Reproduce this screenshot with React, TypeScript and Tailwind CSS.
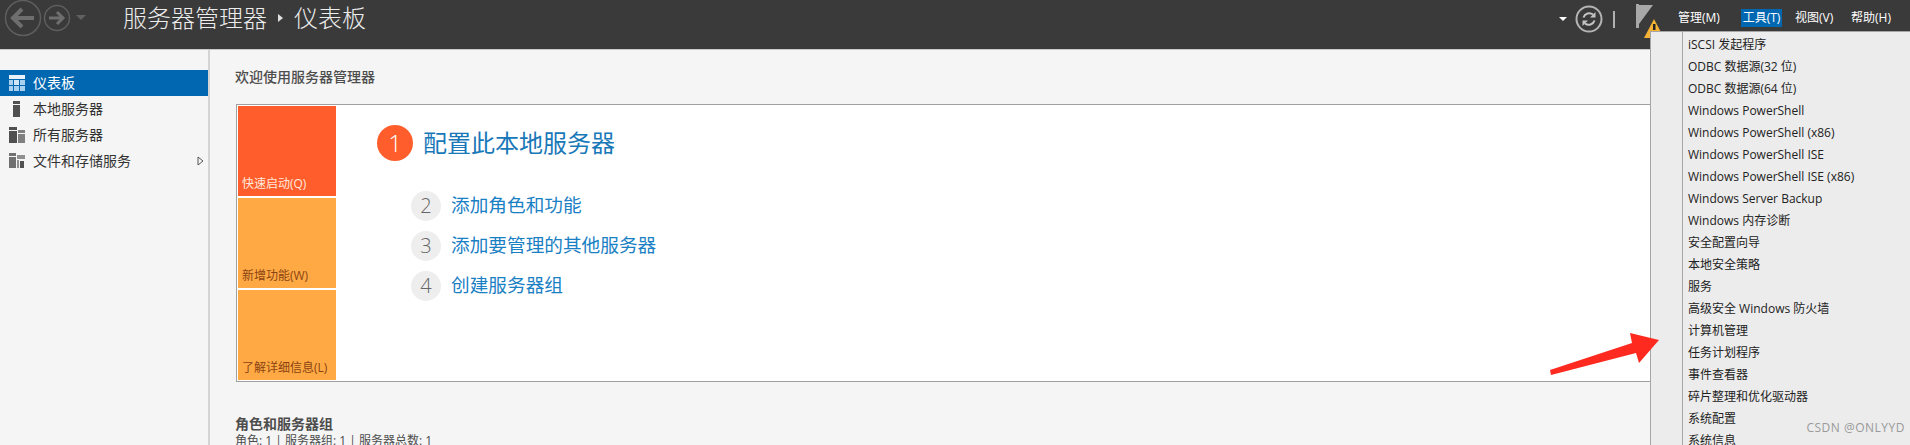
const menuItems = [
    "iSCSI 发起程序",
    "ODBC 数据源(32 位)",
    "ODBC 数据源(64 位)",
    "Windows PowerShell",
    "Windows PowerShell (x86)",
    "Windows PowerShell ISE",
    "Windows PowerShell ISE (x86)",
    "Windows Server Backup",
    "Windows 内存诊断",
    "安全配置向导",
    "本地安全策略",
    "服务",
    "高级安全 Windows 防火墙",
    "计算机管理",
    "任务计划程序",
    "事件查看器",
    "碎片整理和优化驱动器",
    "系统配置",
    "系统信息",
]

const steps = [
    { n: "2", label: "添加角色和功能" },
    { n: "3", label: "添加要管理的其他服务器" },
    { n: "4", label: "创建服务器组" },
]

function NavButtons() {
    return (
        <svg width="92" height="38" viewBox="0 0 92 38" className="shrink-0">
            <circle cx="23" cy="18" r="17.5" fill="none" stroke="#5e5e5e" strokeWidth="1.5" />
            <path d="M34 18H13M22 9l-9 9 9 9" fill="none" stroke="#6e6e6e" strokeWidth="4" />
            <circle cx="57" cy="18" r="12.5" fill="none" stroke="#5e5e5e" strokeWidth="1.5" />
            <path d="M49 18h14M57 12l6 6-6 6" fill="none" stroke="#6e6e6e" strokeWidth="3" />
            <path d="M76 15h10l-5 5z" fill="#606060" />
        </svg>
    )
}

function NavIcon({ kind }: { kind: string }) {
    if (kind === "dash") {
        return (
            <svg width="16" height="16" viewBox="0 0 16 16">
                <rect x="0" y="0" width="16" height="4" fill="#e8f2fa" />
                <rect x="0" y="5" width="4" height="5" fill="#a9d0ef" />
                <rect x="5" y="5" width="5" height="5" fill="#cfe4f5" />
                <rect x="11" y="5" width="5" height="5" fill="#a9d0ef" />
                <rect x="0" y="11" width="4" height="5" fill="#a9d0ef" />
                <rect x="5" y="11" width="5" height="5" fill="#a9d0ef" />
                <rect x="11" y="11" width="5" height="5" fill="#a9d0ef" />
            </svg>
        )
    }
    if (kind === "local") {
        return (
            <svg width="16" height="16" viewBox="0 0 16 16">
                <rect x="4" y="0" width="7" height="3" fill="#505050" />
                <rect x="4" y="4" width="7" height="12" fill="#505050" />
            </svg>
        )
    }
    if (kind === "all") {
        return (
            <svg width="16" height="16" viewBox="0 0 16 16">
                <rect x="0" y="0" width="8" height="3" fill="#505050" />
                <rect x="0" y="4" width="8" height="12" fill="#505050" />
                <rect x="9" y="3" width="7" height="3" fill="#808080" />
                <rect x="9" y="7" width="7" height="9" fill="#808080" />
            </svg>
        )
    }
    return (
        <svg width="16" height="16" viewBox="0 0 16 16">
            <path d="M0 0h7v3H0zM0 4h7v11H0z" fill="#707070" />
            <path d="M8 2h8v4H8zM8 7h3v8H8z" fill="#909090" />
            <path d="M10 7h6v9h-6z" fill="#f5f5f5" />
            <path d="M11 8h4v7h-4z" fill="#505050" />
        </svg>
    )
}

function Header() {
    return (
        <header className="flex h-[49px] shrink-0 items-start bg-[#3a3a3a] text-white">
            <NavButtons />
            <div className="ml-[31px] mt-[6px] flex items-center text-[24px] font-light leading-[24px] text-[#ececec]">
                <span>服务器管理器</span>
                <span className="mx-[11px] h-0 w-0 border-y-[4px] border-l-[5px] border-y-transparent border-l-[#e0e0e0]" />
                <span>仪表板</span>
            </div>
            <div className="ml-auto flex h-[38px] items-center">
                <span className="h-0 w-0 border-x-[4px] border-t-[4px] border-x-transparent border-t-white" />
                <svg width="28" height="28" viewBox="0 0 28 28" className="ml-[8px]">
                    <circle cx="14" cy="14" r="12.5" fill="none" stroke="#b4b4b4" strokeWidth="2" />
                    <path d="M8.5 12.5A6 6 0 0 1 18 9.5" fill="none" stroke="#c4c4c4" strokeWidth="2" />
                    <path d="M20.5 7v5.5H15z" fill="#c4c4c4" />
                    <path d="M19.5 15.5A6 6 0 0 1 10 18.5" fill="none" stroke="#c4c4c4" strokeWidth="2" />
                    <path d="M7.5 21v-5.5H13z" fill="#c4c4c4" />
                </svg>
                <span className="ml-[10px] h-[17px] w-[2px] bg-[#b0b0b0]" />
                <div className="relative ml-[21px] h-[22px] w-[18px]">
                    <svg width="30" height="36" viewBox="0 0 30 36" className="absolute -top-[4px] left-0">
                        <path d="M0 0h3v24H0z" fill="#a8a8a8" />
                        <path d="M3 1h14L3 20z" fill="#a8a8a8" />
                        <path d="M18 15l10 19H8z" fill="#f5b335" />
                        <path d="M17 20h2.5v6H17z" fill="#222222" />
                    </svg>
                </div>
                <nav className="ml-[24px] -mt-[2px] grid w-[232px] grid-cols-[63px_41px_13px_56px_auto] items-center text-[12px] leading-[18px] text-white">
                    <span>管理(M)</span>
                    <span className="whitespace-nowrap bg-[#0067b0] text-center">工具(T)</span>
                    <span />
                    <span>视图(V)</span>
                    <span>帮助(H)</span>
                </nav>
            </div>
        </header>
    )
}

function Sidebar() {
    return (
        <aside className="flex w-[210px] shrink-0 flex-col border-r-2 border-[#d4d4d4] pt-[20px] text-[14px] text-[#333333]">
            <div className="flex h-[26px] w-[208px] items-center gap-[8px] bg-[#0067b0] pl-[9px] text-white">
                <NavIcon kind="dash" />
                <span className="pb-[2px]">仪表板</span>
            </div>
            <div className="flex h-[26px] items-center gap-[8px] pl-[9px]">
                <NavIcon kind="local" />
                <span className="pb-[2px]">本地服务器</span>
            </div>
            <div className="flex h-[26px] items-center gap-[8px] pl-[9px]">
                <NavIcon kind="all" />
                <span className="pb-[2px]">所有服务器</span>
            </div>
            <div className="flex h-[26px] items-center gap-[8px] pl-[9px] pr-[4px]">
                <NavIcon kind="files" />
                <span className="pb-[2px]">文件和存储服务</span>
                <svg width="7" height="10" viewBox="0 0 7 10" className="ml-auto">
                    <path d="M1 1l5 4-5 4z" fill="none" stroke="#555555" />
                </svg>
            </div>
        </aside>
    )
}

function QuickStart() {
    return (
        <section className="flex h-[278px] border border-[#a0a0a0] bg-white p-[1px]">
            <div className="flex w-[98px] shrink-0 flex-col gap-[2px] text-[12px] leading-[16px]">
                <div className="flex h-[90px] items-end bg-[#ff5e2c] pb-[4px] pl-[4px] text-[#ffe9dc]">快速启动(Q)</div>
                <div className="flex h-[90px] items-end bg-[#ffa944] pb-[4px] pl-[4px] text-[#8a4412]">新增功能(W)</div>
                <div className="flex h-[90px] items-end bg-[#ffa944] pb-[4px] pl-[4px] text-[#8a4412]">了解详细信息(L)</div>
            </div>
            <div className="pl-[41px] pt-[19px]">
                <div className="flex items-center gap-[10px]">
                    <span className="flex h-[36px] w-[36px] items-center justify-center rounded-full bg-[#ff5e2c] text-[24px] font-light text-white">1</span>
                    <span className="text-[24px] leading-[36px] text-[#1878b8]">配置此本地服务器</span>
                </div>
                <div className="mt-[30px] flex flex-col gap-[10px] pl-[34px]">
                    {steps.map((s) => (
                        <div key={s.n} className="flex h-[30px] items-center gap-[10px]">
                            <span className="flex h-[30px] w-[30px] items-center justify-center rounded-full bg-[#eeeeee] text-[20px] font-light text-[#666666]">{s.n}</span>
                            <span className="pb-[2px] text-[18.67px] text-[#1a80c4]">{s.label}</span>
                        </div>
                    ))}
                </div>
            </div>
        </section>
    )
}

function ToolsMenu() {
    return (
        <div className="absolute left-[1650px] right-0 top-[31px] flex h-[414px] overflow-hidden border-l border-t border-[#a6a6a6] bg-[#ececec] pl-[31px]">
            <ul className="border-l border-[#a6a6a6] pl-[5px] pt-[2px] text-[12px] text-[#222222]">
                {menuItems.map((item) => (
                    <li key={item} className="flex h-[22px] items-center whitespace-nowrap">{item}</li>
                ))}
            </ul>
        </div>
    )
}

export default function App() {
    return (
        <div className="relative flex h-[445px] w-[1910px] flex-col overflow-hidden bg-[#f5f5f5] font-['Open_Sans','Noto_Sans_CJK_SC',sans-serif]">
            <Header />
            <div className="h-px bg-[#c8c8c8]" />
            <div className="flex min-h-0 flex-1">
                <Sidebar />
                <main className="min-w-0 flex-1 pl-[26px] pt-[17px] text-[#4d4d4d]">
                    <h1 className="-ml-px text-[14px] font-medium leading-[20px]">欢迎使用服务器管理器</h1>
                    <div className="mt-[17px]">
                        <QuickStart />
                    </div>
                    <div className="-ml-px mt-[32px] text-[14px] font-bold leading-[19px]">角色和服务器组</div>
                    <div className="-ml-px text-[12px] leading-[16px]">角色: 1 | 服务器组: 1 | 服务器总数: 1</div>
                </main>
            </div>
            <ToolsMenu />
            <svg width="120" height="50" viewBox="0 0 120 50" className="absolute left-[1546px] top-[330px]">
                <path d="M5 45L4 40 86 13 84 3 113 10 93 33 90 23z" fill="#ff2a1f" />
            </svg>
            <span className="absolute bottom-[8px] right-[5px] text-[12px] tracking-[0.5px] text-[#9a9a9a]">CSDN @ONLYYD</span>
        </div>
    )
}
